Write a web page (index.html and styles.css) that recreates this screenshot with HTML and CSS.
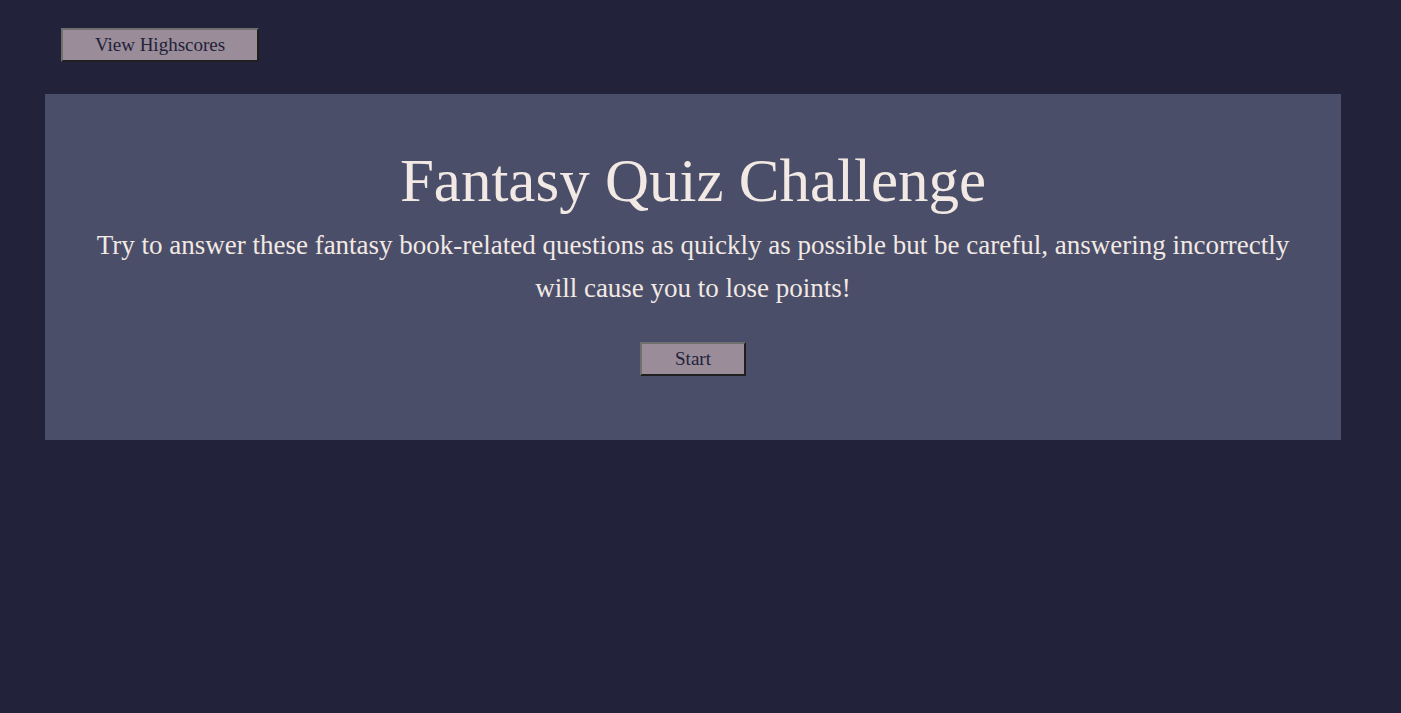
FILE: index.html
```html
<!DOCTYPE html>
<html lang="en">
<head>
<meta charset="utf-8">
<title>Fantasy Quiz Challenge</title>
<link rel="stylesheet" href="styles.css">
</head>
<body>
<header class="top">
  <button class="btn btn-scores">View Highscores</button>
</header>
<main class="card">
  <h1 class="title">Fantasy Quiz Challenge</h1>
  <p class="intro">Try to answer these fantasy book-related questions as quickly as possible but be careful, answering incorrectly will cause you to lose points!</p>
  <button class="btn btn-start">Start</button>
</main>
</body>
</html>
```
FILE: styles.css
```css
html, body {
  margin: 0;
  padding: 0;
  background: #22223b;
  height: 100%;
}
body {
  font-family: "Liberation Serif", "DejaVu Serif", serif;
  color: #f2e9e4;
}
.top {
  padding: 28px 0 0 61px;
  height: 94px;
  box-sizing: border-box;
}
.btn {
  font-family: "Liberation Serif", serif;
  background: #9a8c98;
  color: #22223b;
  border: 2px solid;
  border-color: #6f6f6f #1f1f1f #1f1f1f #6f6f6f;
  font-size: 19px;
  cursor: pointer;
  padding: 0;
  box-sizing: border-box;
}
.btn-scores {
  width: 198px;
  height: 34px;
}
.card {
  margin-left: 45px;
  width: 1296px;
  height: 346px;
  box-sizing: border-box;
  background: #4a4e69;
  display: flex;
  flex-direction: column;
  align-items: center;
  padding-top: 44px;
}
.title {
  margin: 0;
  font-weight: normal;
  font-size: 61px;
  line-height: 86px;
}
.intro {
  margin: 0;
  width: 1200px;
  text-align: center;
  font-size: 27px;
  line-height: 43px;
}
.btn-start {
  margin-top: 32px;
  width: 106px;
  height: 34px;
}
```
